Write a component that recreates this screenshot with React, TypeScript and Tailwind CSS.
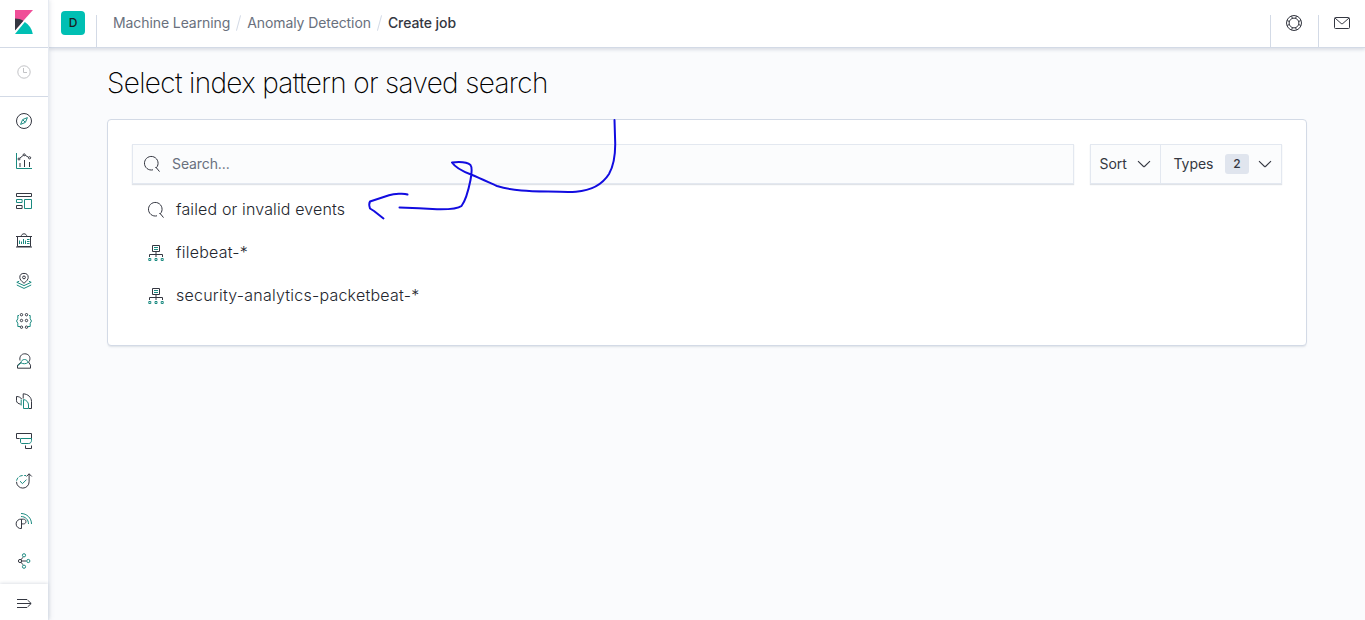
import type { ReactNode } from "react";

const DARK = "#343741";
const TEAL = "#1a8a80";

function Icon({ children, size = 16, className = "" }: { children: ReactNode; size?: number; className?: string }) {
  return (
    <svg
      width={size}
      height={size}
      viewBox="0 0 16 16"
      fill="none"
      stroke={DARK}
      strokeWidth={1}
      className={`block shrink-0 overflow-visible ${className}`}
    >
      {children}
    </svg>
  );
}

const navIcons: { name: string; art: ReactNode }[] = [
  {
    name: "Discover",
    art: (
      <>
        <circle cx="8" cy="8" r="7.5" />
        <path stroke={TEAL} d="M11.4 4.6 9.4 9.4 4.6 11.4 6.6 6.6zM6.9 6.9l2.2 2.2" />
      </>
    ),
  },
  {
    name: "Visualize",
    art: (
      <>
        <path stroke={TEAL} d="M.5 0v15.5H16" />
        <path d="M4 10v4M8.5 7v7M13.5 9v5" />
        <path d="M3.8 5.2 7.2 2.4M9.2 2.3l3.4 2" />
        <circle cx="3" cy="6" r="1" />
        <circle cx="8.2" cy="1.8" r="1" />
        <circle cx="13.6" cy="4.8" r="1.1" />
      </>
    ),
  },
  {
    name: "Dashboard",
    art: (
      <>
        <path d="M.5.5h15v3H.5zM.5 12.5h5.6v3H.5z" />
        <path stroke={TEAL} d="M.5 6.5h5.6v3H.5zM8.5 6.5h7v9h-7z" />
      </>
    ),
  },
  {
    name: "Canvas",
    art: (
      <>
        <path d="M1.5 3.5h13v10h-13zM0 3.5h16M0 14h16M5 3.5C5.5 1.8 6.4.8 8 .8s2.5 1 3 2.7" />
        <path stroke={TEAL} d="M3.5 7.5V11M5.5 8.5V11M7.5 6V11M9.5 7.5V11M11 6.5h2.5M11 8.5h2.5M11 10.5h2.5" />
      </>
    ),
  },
  {
    name: "Maps",
    art: (
      <>
        <path d="M8 10.3C5.2 8 3.8 6.3 3.8 4.4a4.2 4 0 0 1 8.4 0C12.2 6.3 10.8 8 8 10.3z" />
        <circle cx="8" cy="4.4" r="1.4" />
        <path stroke={TEAL} d="M3.2 8.2.8 9.3 8 12.6l7.2-3.3-2.4-1.1M.8 12 8 15.4l7.2-3.4" />
      </>
    ),
  },
  {
    name: "Machine Learning",
    art: (
      <>
        <path stroke={TEAL} d="M3 2.5H1.8v3.3L.5 8l1.3 2.2v3.3H4M13 2.5h1.2v3.3L15.5 8l-1.3 2.2v3.3H12" />
        <circle cx="5.5" cy="1.7" r="1.2" />
        <circle cx="10.5" cy="1.7" r="1.2" />
        <circle cx="5.5" cy="7.5" r="1.2" />
        <circle cx="10.5" cy="7.5" r="1.2" />
        <circle cx="5.5" cy="14.2" r="1.2" />
        <circle cx="10.5" cy="14.2" r="1.2" />
      </>
    ),
  },
  {
    name: "Metrics",
    art: (
      <>
        <path d="M4 7.5C3.2 3.8 5.2.8 8.8.8s5.7 2.8 5 6c-.4 1.6-1.3 2.2-1.3 2.2l2 3.2v3h-13v-3L5 9.4" />
        <path stroke={TEAL} d="M5 9.8c.3-2.1 1.6-3.3 3.5-3.3s3 1 3.6 2.9c-1.8 1.6-5.2 1.8-7.1.4zM5 9.8l-3.2 3" />
      </>
    ),
  },
  {
    name: "Logs",
    art: (
      <>
        <path d="M7.2 5.6V.8c4.8.2 8.3 3.5 8.3 7.7v7h-2.7M4.7 11.2C2.3 10.7.5 9.7.5 7.7V3.5c2.300 0 4.200.9 5.200 2.600" />
        <path stroke={TEAL} d="M7.5 6.5v9h5V12c0-2.700-2-5-5-5.500zM5.200 6.500v6" />
      </>
    ),
  },
  {
    name: "APM",
    art: (
      <>
        <path d="M3.700 5.500H.5v-5h15v5h-3M9.500 12.500v3h6v-3" />
        <path stroke={TEAL} d="M4.500 5.500h11v1.800c0 1.800-1 3.200-2.800 3.200H6c-1 0-1.500-.6-1.500-1.500z" />
      </>
    ),
  },
  {
    name: "Uptime",
    art: (
      <>
        <path d="M.5 8.800a6.300 6.300 0 0 0 12.600 0V.8M10.400 3.500l2.700-2.700 2.700 2.700" />
        <path stroke={TEAL} strokeDasharray="3.500 1.500" d="M.6 7.700C1.200 4.500 3.800 2.500 7 2.500h3" />
        <path stroke={TEAL} d="M4 8.200 6.500 10.600 10.500 6.600" />
      </>
    ),
  },
  {
    name: "SIEM",
    art: (
      <>
        <path d="M5.500 6.200a4.700 4.700 0 1 0 0 9.300zM5.500 6.200h2.100c1.500 0 2.300 1 2.300 2.300s-.8 2.400-2.300 2.400H5.500" />
        <path stroke={TEAL} d="M5 .5c5.900 0 10.500 4.600 10.500 10.500M5 3.500c4.400 0 7.500 3.100 7.500 7.500" />
      </>
    ),
  },
  {
    name: "Graph",
    art: (
      <>
        <circle cx="4" cy="8" r="1.6" />
        <path d="M5.600 8h4.600M5 6.800l1.900-2.500M5 9.200l1.900 2.500" />
        <circle cx="8" cy="2.300" r="1.600" stroke={TEAL} />
        <circle cx="12.300" cy="8" r="1.600" stroke={TEAL} />
        <circle cx="8" cy="13.700" r="1.600" stroke={TEAL} />
      </>
    ),
  },
];

function SearchIcon({ className = "" }: { className?: string }) {
  return (
    <Icon className={className}>
      <path d="M9 13.800A6.800 6.800 0 1 1 12.300 11.800M11.300 11.500c.5-.1.900 0 1.200.4l3 3.700" />
    </Icon>
  );
}

function IndexPatternIcon() {
  return (
    <Icon>
      <path d="M4.500.5h7v6h-7zM8 6.500V9M1.500 12V9.500h13V12M8 9.500V12" />
      <path stroke={TEAL} d="M6 2.500h4M6 4.500h4" />
      <path stroke={TEAL} d="M.8 13.500h2v2h-2zM7 13.500h2v2H7zM13.200 13.500h2v2h-2z" />
    </Icon>
  );
}

function ChevronDown() {
  return (
    <Icon>
      <path strokeWidth="1.1" d="M2 5.200 7.500 10.500q.5.400 1 0L14 5.200" />
    </Icon>
  );
}

function Sidebar() {
  return (
    <nav className="relative z-10 flex w-[49px] shrink-0 flex-col border-r border-[#e6eaf1] bg-white shadow-[1px_0_4px_rgba(152,162,179,0.25)]">
      <div className="flex h-12 shrink-0 items-center border-b border-[#d3dae6] pb-[3px] pl-[15px]">
        <svg width="18" height="24" viewBox="0 0 18 24" className="block">
          <path fill="#f04e98" d="M0 0h18L0 20z" />
          <path fill="#343741" d="M0 8.500c3.200 0 6 .8 8.400 2.200L0 20.500z" />
          <path fill="#00bfb3" d="M9.800 12c4.200 2.700 7.100 6.900 8 12H0z" />
          <path stroke="#fff" strokeWidth=".6" d="M0 22 9.700 10.900" />
        </svg>
      </div>
      <div className="flex h-[49px] shrink-0 items-center justify-center border-b border-[#d3dae6]">
        <svg width="14" height="14" viewBox="0 0 14 14" fill="none" stroke="#c2c3c6" className="block">
          <circle cx="7" cy="7" r="6.2" />
          <path d="M6.500 3v4.500H10" />
        </svg>
      </div>
      <div className="flex grow flex-col pt-1">
        {navIcons.map((item) => (
          <a key={item.name} aria-label={item.name} className="flex h-10 items-center justify-center">
            <Icon>{item.art}</Icon>
          </a>
        ))}
      </div>
      <div className="flex h-9 shrink-0 items-center justify-center bg-white pt-[2px] shadow-[0_-1px_3px_rgba(152,162,179,0.3)]">
        <Icon>
          <path d="M1 4.500h10M1 8.500h14M1 12.500h10M11.500 5l3.700 3.500-3.700 3.500" />
        </Icon>
      </div>
    </nav>
  );
}

function Header() {
  return (
    <header className="flex h-12 shrink-0 border-b border-[#d3dae6] bg-white shadow-[0_2px_3px_rgba(152,162,179,0.3)]">
      <div className="flex w-[47px] items-start justify-center pt-[11px] pl-px">
        <span className="flex size-6 items-center justify-center rounded bg-[#00bfb3] text-xs font-medium text-[#1a1c21]">
          D
        </span>
      </div>
      <div className="mt-[15px] border-l border-[#d3dae6]" />
      <div className="flex grow items-center pb-[1px] pl-4 text-sm tracking-[-0.09px] text-[#69707d]">
        <span>Machine Learning</span>
        <span className="mx-2 h-4 w-px rotate-[15deg] bg-[#d3dae6]" />
        <span>Anomaly Detection</span>
        <span className="mx-2 h-4 w-px rotate-[15deg] bg-[#d3dae6]" />
        <span className="font-medium text-[#343741]">Create job</span>
      </div>
      <div className="mt-[15px] flex w-12 justify-center border-l border-[#d3dae6] pr-px">
        <Icon>
          <circle cx="8" cy="8" r="7.500" />
          <circle cx="8" cy="8" r="4.900" />
          <path d="M5.500 1.200 6.600 3.500M10.500 1.200 9.400 3.500M5.500 14.800l1.100-2.300M10.500 14.800l-1.100-2.300M1.200 5.500l2.300 1.100M1.200 10.500l2.300-1.100M14.800 5.500l-2.300 1.100M14.800 10.500l-2.300-1.100" />
        </Icon>
      </div>
      <div className="mt-[15px] flex w-[47px] justify-center border-l border-[#d3dae6]">
        <Icon>
          <rect x=".5" y="2.500" width="15" height="11" rx="1" />
          <path d="m1 3 6.200 5.500q.8.600 1.600 0L15 3" />
        </Icon>
      </div>
    </header>
  );
}

function ResultRow({ icon, label, className = "" }: { icon: ReactNode; label: string; className?: string }) {
  return (
    <li className={`flex h-[43px] items-center gap-3 ${className}`}>
      <span className="pt-[2px]">{icon}</span>
      <span>{label}</span>
    </li>
  );
}

const controlShadow = "border border-[#e3e8f0] bg-[#fbfcfd] shadow-[0_1px_1px_rgba(152,162,179,0.3)]";

export default function App() {
  return (
    <div className="relative flex h-[620px] w-[1365px] overflow-hidden bg-[#fafbfd] font-[Inter,sans-serif] text-[#343741]">
      <Sidebar />
      <div className="flex grow flex-col">
        <Header />
        <main className="px-[58px] pt-[15px]">
          <h1 className="text-[28px] leading-10 font-extralight tracking-[-0.66px] text-black">
            Select index pattern or saved search
          </h1>
          <section className="mt-4 h-[227px] rounded border border-[#d3dae6] bg-white px-6 pt-6 shadow-[0_2px_2px_-1px_rgba(152,162,179,0.3)]">
            <div className="flex h-10 gap-4">
              <label className={`flex grow items-center gap-3 pb-px pl-[11px] ${controlShadow}`}>
                <SearchIcon />
                <input
                  placeholder="Search..."
                  className="grow bg-transparent pt-px text-sm tracking-[-0.1px] outline-none placeholder:text-[#69707d]"
                />
              </label>
              <div className={`flex w-[192px] text-sm tracking-[-0.05px] ${controlShadow}`}>
                <button className="flex w-[70px] items-center justify-between border-r border-[#e3e8f0] pr-2 pl-[8.5px]">
                  Sort
                  <ChevronDown />
                </button>
                <button className="flex grow items-center justify-between pr-2 pl-[12.5px]">
                  Types
                  <span className="flex items-center gap-2">
                    <span className="flex h-5 w-6 items-center justify-center rounded-[3px] bg-[#e0e5ee] text-xs font-medium">
                      2
                    </span>
                    <ChevronDown />
                  </span>
                </button>
              </div>
            </div>
            <ul className="mt-[3px] pl-4 text-base font-light text-[#23262e]">
              <ResultRow icon={<SearchIcon />} label="failed or invalid events" className="tracking-[0.14px]" />
              <ResultRow icon={<IndexPatternIcon />} label="filebeat-*" className="tracking-[0.22px]" />
              <ResultRow icon={<IndexPatternIcon />} label="security-analytics-packetbeat-*" className="tracking-[0.23px]" />
            </ul>
          </section>
        </main>
      </div>
      <svg
        className="pointer-events-none absolute top-[110px] left-[360px] z-20"
        width="270"
        height="120"
        viewBox="360 110 270 120"
        fill="none"
        stroke="#120ce0"
        strokeWidth="2"
        strokeLinecap="round"
        strokeLinejoin="round"
      >
        <path d="M614.5 120 615.2 143C615.4 158 613.5 166 609 174C602 185 592 190.5 576 191.7C567 192.3 560 191.6 548 191.6C528 191.3 514 191 497 186C491 183.500 483 179.500 471 174.500C463 171.500 455 167 452 162.500C461 161.500 467 162 470.500 165C472.500 167.500 471.800 173 470.500 180C468.500 190 466 200 461.500 206C457 209.500 447 209.500 437 209.300C423 208.500 412 208 399.500 207.500" />
        <path d="M407.500 194.500C404 193 394 193.800 389 195.300L370 201.500Q368.500 204 370 208.500L374 211 383.500 218.500" />
      </svg>
    </div>
  );
}
